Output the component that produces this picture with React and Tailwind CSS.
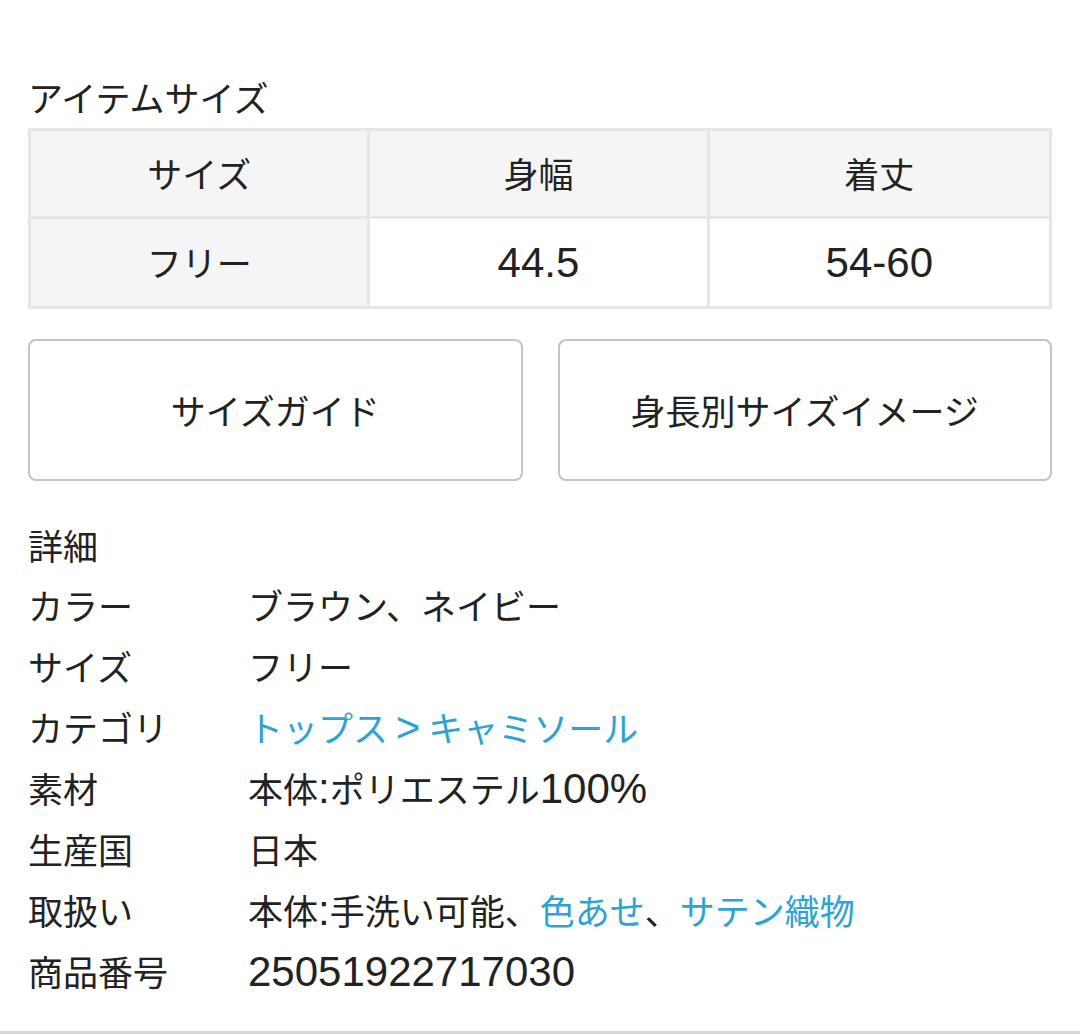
const LINK = "text-[#2ea3d3]";

// latin runs are set larger, like Hiragino's latin glyphs
const L = ({ children }) => (
  <span className="text-[42px] leading-none font-['Liberation_Sans',sans-serif]">{children}</span>
);

const sizeHeaders = ["サイズ", "身幅", "着丈"];
const sizeRow = [<span>フリー</span>, <L>44.5</L>, <L>54-60</L>];

const details = [
  { label: "カラー", value: <span>ブラウン、ネイビー</span> },
  { label: "サイズ", value: <span>フリー</span> },
  {
    label: "カテゴリ",
    value: (
      <span className={LINK}>
        トップス <L>&gt;</L> キャミソール
      </span>
    ),
  },
  {
    label: "素材",
    value: (
      <span>
        本体<L>:</L>ポリエステル<L>100%</L>
      </span>
    ),
  },
  { label: "生産国", value: <span>日本</span> },
  {
    label: "取扱い",
    value: (
      <span>
        本体<L>:</L>手洗い可能、<span className={LINK}>色あせ</span>、
        <span className={LINK}>サテン織物</span>
      </span>
    ),
  },
  { label: "商品番号", value: <L>25051922717030</L> },
];

export default function App() {
  return (
    <div
      className="w-[1080px] h-[1035px] bg-white text-[#222] overflow-hidden flex flex-col"
      style={{ fontFamily: '"Noto Sans CJK JP", "Noto Sans", sans-serif' }}
    >
      <div className="px-[28px] pt-[74px] flex-1">
        <h2 className="text-[35px] leading-[46px] font-normal">アイテムサイズ</h2>

        <div className="mt-[8px] border-[3px] border-[#e6e6e6] grid grid-cols-3">
          {sizeHeaders.map((h, i) => (
            <div
              key={h}
              className={`h-[88px] bg-[#f5f5f5] flex items-center justify-center text-[35px] border-b-[3px] border-[#e6e6e6] ${
                i < 2 ? "border-r-[3px]" : ""
              }`}
            >
              {h}
            </div>
          ))}
          {sizeRow.map((v, i) => (
            <div
              key={i}
              className={`h-[87px] flex items-center justify-center text-[35px] border-[#e6e6e6] ${
                i === 0 ? "bg-[#f5f5f5]" : "bg-white"
              } ${i < 2 ? "border-r-[3px]" : ""}`}
            >
              {v}
            </div>
          ))}
        </div>

        <div className="mt-[30px] flex gap-[35px]">
          <button className="flex-1 h-[142px] border-2 border-[#c4c4c4] rounded-[8px] bg-white text-[35px] text-[#222]">
            サイズガイド
          </button>
          <button className="flex-1 h-[142px] border-2 border-[#c4c4c4] rounded-[8px] bg-white text-[35px] text-[#222]">
            身長別サイズイメージ
          </button>
        </div>

        <div className="mt-[34px] h-[60px] flex items-center text-[35px]">詳細</div>
        <div className="text-[35px]">
          {details.map((d) => (
            <div key={d.label} className="flex items-center h-[61px]">
              <div className="w-[220px] shrink-0">{d.label}</div>
              <div>{d.value}</div>
            </div>
          ))}
        </div>
      </div>
      <div className="h-[3px] bg-[#d6d6d6] mb-[1px]" />
    </div>
  );
}
